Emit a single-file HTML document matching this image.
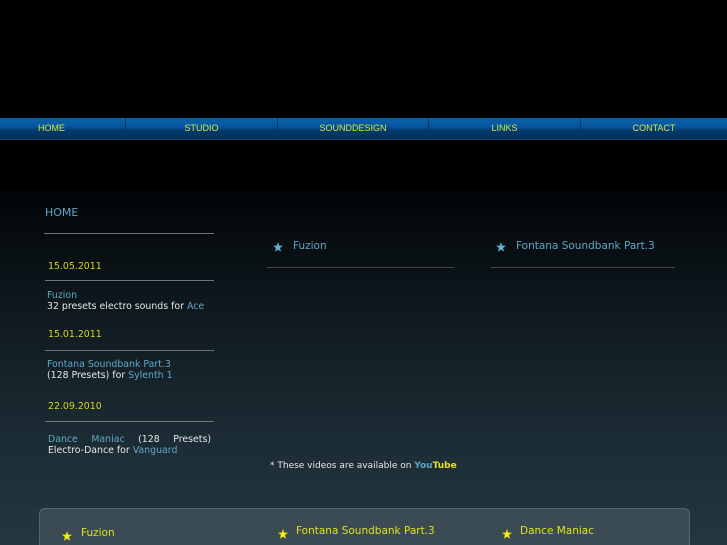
<!DOCTYPE html>
<html style="width:727px;height:545px;overflow:hidden"><head><meta charset="utf-8"><style>
*{margin:0;padding:0;box-sizing:border-box}
body{width:727px;height:545px;overflow:hidden;background:#000;font-family:"DejaVu Sans",sans-serif;position:relative}
.bg{position:absolute;left:0;top:190px;width:727px;height:355px;background:linear-gradient(#020406 0%,#0d171c 30%,#1c2c34 70%,#24363f 100%)}
.nav{position:absolute;left:0;top:118px;width:727px;height:22px;background:linear-gradient(#0a62a8 0%,#0656a0 40%,#03396c 60%,#03305c 100%);border-bottom:1px solid #0a4070}
.nav div{position:absolute;top:0;height:21px;text-align:center;font:9px "Liberation Sans",sans-serif;line-height:21px;color:#d8e43a;border-right:1px solid #0a3a66}
.a{position:absolute;font-size:9.4px;color:#e6e6e6;white-space:nowrap}
.b{color:#5fa7c8}
.y{color:#d5d71a}
.hr{position:absolute;height:1px;background:#6d7478}
.st{position:absolute;width:10px;height:10px}
.box{position:absolute;left:39px;top:508px;width:651px;height:45px;background:#3a4b54;border:1px solid #566770;border-radius:6px}
</style></head><body>
<div class="bg"></div>
<div class="nav">
<div style="left:0;width:126px;text-align:left;padding-left:38px">HOME</div>
<div style="left:126px;width:152px">STUDIO</div>
<div style="left:278px;width:151px">SOUNDDESIGN</div>
<div style="left:429px;width:152px">LINKS</div>
<div style="left:581px;width:146px;border:none">CONTACT</div>
</div>
<div class="a b" style="left:45px;top:206px;font-size:11px">HOME</div>
<div class="hr" style="left:44px;top:233px;width:170px"></div>
<div class="a y" style="left:48px;top:261px">15.05.2011</div>
<div class="hr" style="left:45px;top:280px;width:169px"></div>
<div class="a b" style="left:47px;top:290px">Fuzion</div>
<div class="a" style="left:47px;top:301px">32 presets electro sounds for <span class="b">Ace</span></div>
<div class="a y" style="left:48px;top:329px">15.01.2011</div>
<div class="hr" style="left:45px;top:350px;width:169px"></div>
<div class="a b" style="left:47px;top:359px">Fontana Soundbank Part.3</div>
<div class="a" style="left:47px;top:370px">(128 Presets) for <span class="b">Sylenth 1</span></div>
<div class="a y" style="left:48px;top:401px">22.09.2010</div>
<div class="hr" style="left:45px;top:421px;width:169px"></div>
<div class="a" style="left:48px;top:434px;width:163px;display:flex;justify-content:space-between"><span class="b">Dance</span><span class="b">Maniac</span><span>(128</span><span>Presets)</span></div>
<div class="a" style="left:48px;top:445px">Electro-Dance for <span class="b">Vanguard</span></div>

<svg class="st" style="left:273px;top:242px" viewBox="0 0 10 10"><polygon points="5,0 6.2,3.6 10,3.7 7,6 8.1,9.8 5,7.6 1.9,9.8 3,6 0,3.7 3.8,3.6" fill="#5fb0d8"/></svg>
<div class="a b" style="left:293px;top:240px;font-size:10.5px">Fuzion</div>
<div class="hr" style="left:267px;top:267px;width:187px;background:#444"></div>
<svg class="st" style="left:496px;top:242px" viewBox="0 0 10 10"><polygon points="5,0 6.2,3.6 10,3.7 7,6 8.1,9.8 5,7.6 1.9,9.8 3,6 0,3.7 3.8,3.6" fill="#5fb0d8"/></svg>
<div class="a b" style="left:516px;top:240px;font-size:10.5px">Fontana Soundbank Part.3</div>
<div class="hr" style="left:491px;top:267px;width:184px;background:#444"></div>

<div class="a" style="left:270px;top:461px;font-size:9px">* These videos are available on <b class="b">You</b><b style="color:#e8e020">Tube</b></div>

<div class="box"></div>
<svg class="st" style="left:62px;top:531px" viewBox="0 0 10 10"><polygon points="5,0 6.2,3.6 10,3.7 7,6 8.1,9.8 5,7.6 1.9,9.8 3,6 0,3.7 3.8,3.6" fill="#f0ee10"/></svg>
<div class="a" style="left:81px;top:527px;font-size:10.5px;color:#e0e020">Fuzion</div>
<svg class="st" style="left:278px;top:529px" viewBox="0 0 10 10"><polygon points="5,0 6.2,3.6 10,3.7 7,6 8.1,9.8 5,7.6 1.9,9.8 3,6 0,3.7 3.8,3.6" fill="#f0ee10"/></svg>
<div class="a" style="left:296px;top:525px;font-size:10.5px;color:#e0e020">Fontana Soundbank Part.3</div>
<svg class="st" style="left:502px;top:529px" viewBox="0 0 10 10"><polygon points="5,0 6.2,3.6 10,3.7 7,6 8.1,9.8 5,7.6 1.9,9.8 3,6 0,3.7 3.8,3.6" fill="#f0ee10"/></svg>
<div class="a" style="left:520px;top:525px;font-size:10.5px;color:#e0e020">Dance Maniac</div>
</body></html>
